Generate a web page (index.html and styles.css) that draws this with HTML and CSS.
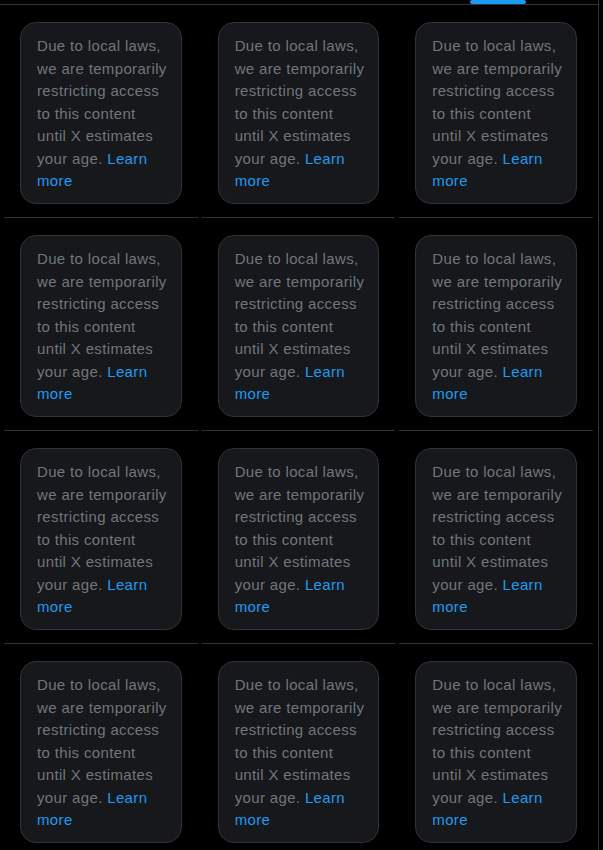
FILE: index.html
```html
<!DOCTYPE html>
<html lang="en">
<head>
<meta charset="utf-8">
<title>Media grid</title>
<link rel="stylesheet" href="styles.css">
</head>
<body>
<div class="column">
  <div class="tabs"><span class="indicator"></span></div>
  <div class="grid">
    <div class="cell"><div class="notice">Due to local laws, we are temporarily restricting access to this content until X estimates your age. <a href="#">Learn more</a></div></div>
    <div class="cell"><div class="notice">Due to local laws, we are temporarily restricting access to this content until X estimates your age. <a href="#">Learn more</a></div></div>
    <div class="cell"><div class="notice">Due to local laws, we are temporarily restricting access to this content until X estimates your age. <a href="#">Learn more</a></div></div>
    <div class="cell"><div class="notice">Due to local laws, we are temporarily restricting access to this content until X estimates your age. <a href="#">Learn more</a></div></div>
    <div class="cell"><div class="notice">Due to local laws, we are temporarily restricting access to this content until X estimates your age. <a href="#">Learn more</a></div></div>
    <div class="cell"><div class="notice">Due to local laws, we are temporarily restricting access to this content until X estimates your age. <a href="#">Learn more</a></div></div>
    <div class="cell"><div class="notice">Due to local laws, we are temporarily restricting access to this content until X estimates your age. <a href="#">Learn more</a></div></div>
    <div class="cell"><div class="notice">Due to local laws, we are temporarily restricting access to this content until X estimates your age. <a href="#">Learn more</a></div></div>
    <div class="cell"><div class="notice">Due to local laws, we are temporarily restricting access to this content until X estimates your age. <a href="#">Learn more</a></div></div>
    <div class="cell"><div class="notice">Due to local laws, we are temporarily restricting access to this content until X estimates your age. <a href="#">Learn more</a></div></div>
    <div class="cell"><div class="notice">Due to local laws, we are temporarily restricting access to this content until X estimates your age. <a href="#">Learn more</a></div></div>
    <div class="cell"><div class="notice">Due to local laws, we are temporarily restricting access to this content until X estimates your age. <a href="#">Learn more</a></div></div>
  </div>
</div>
</body>
</html>
```

FILE: styles.css
```css
html, body {
  margin: 0;
  padding: 0;
  background: #000;
  height: 100%;
  overflow: hidden;
}

.column {
  width: 598px;
  min-height: 850px;
  border-right: 1px solid #2f3336;
  font-family: "Liberation Sans", Arial, sans-serif;
}

.tabs {
  position: relative;
  height: 4px;
  border-bottom: 1px solid #2f3336;
}

.indicator {
  position: absolute;
  left: 470px;
  top: 0;
  width: 56px;
  height: 4px;
  border-radius: 2px;
  background: #1d9bf0;
}

.grid {
  display: grid;
  grid-template-columns: repeat(3, 1fr);
  column-gap: 4px;
  padding: 0 5px 0 4px;
}

.cell {
  padding: 17px 16px 13px;
  border-bottom: 1px solid #2f3336;
}

.notice {
  background: #16181c;
  border: 1px solid #2f3336;
  border-radius: 16px;
  padding: 12px 12.6px 10.5px 16px;
  color: #71767b;
  font-size: 15px;
  line-height: 22.5px;
  letter-spacing: 0.35px;
}

.notice a {
  color: #1d9bf0;
  text-decoration: none;
}
```
